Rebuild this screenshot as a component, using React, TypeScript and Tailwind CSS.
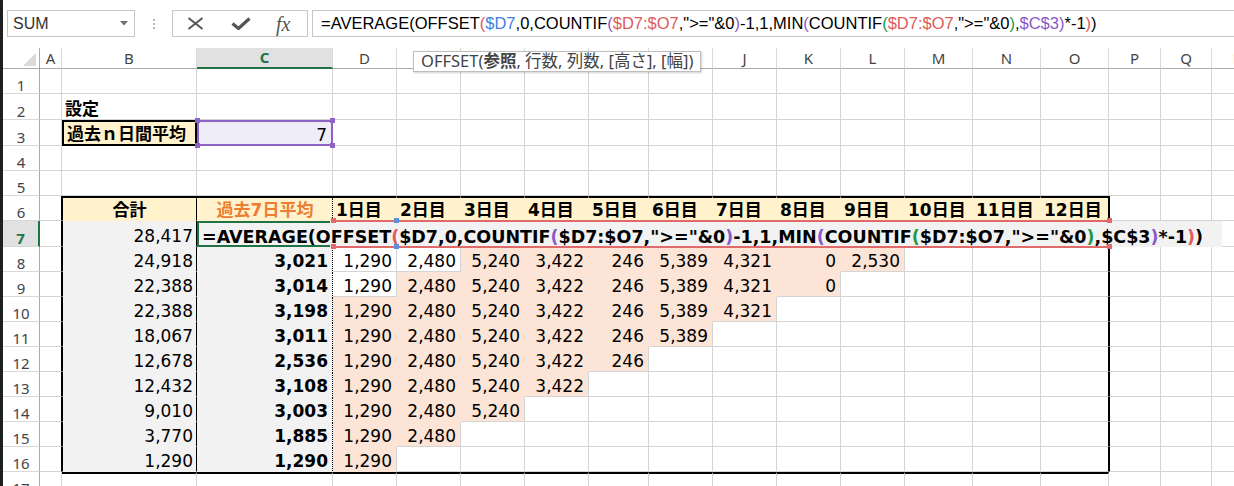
import React from "react";
import clsx from "clsx";

type Fill = "yellow" | "gray" | "salmon" | "lavender";

const COLS = [
  { name: "A", w: "w-[22px]" },
  { name: "B", w: "w-[135px]" },
  { name: "C", w: "w-[136px]" },
  { name: "D", w: "w-[64px]" },
  { name: "E", w: "w-[64px]" },
  { name: "F", w: "w-[64px]" },
  { name: "G", w: "w-[64px]" },
  { name: "H", w: "w-[60px]" },
  { name: "I", w: "w-[64px]" },
  { name: "J", w: "w-[64px]" },
  { name: "K", w: "w-[64px]" },
  { name: "L", w: "w-[64px]" },
  { name: "M", w: "w-[68px]" },
  { name: "N", w: "w-[68px]" },
  { name: "O", w: "w-[68px]" },
  { name: "P", w: "w-[52px]" },
  { name: "Q", w: "w-[51px]" },
  { name: "R", w: "w-[52px]" },
];

// headers hidden behind the function tooltip
const UNDER_TIP = ["E", "F", "G", "H", "I"];

const ROW_H: Record<number, string> = {
  2: "h-[26px]",
  3: "h-[26px]",
  7: "h-[26px]",
};

const DAYS = ["1,290", "2,480", "5,240", "3,422", "246", "5,389", "4,321", "0", "2,530"];

const DATA: Record<number, { total: string; avg?: string; days: string[]; plain: number }> = {
  7: { total: "28,417", days: [], plain: 0 },
  8: { total: "24,918", avg: "3,021", days: DAYS.slice(0, 9), plain: 2 },
  9: { total: "22,388", avg: "3,014", days: DAYS.slice(0, 8), plain: 1 },
  10: { total: "22,388", avg: "3,198", days: DAYS.slice(0, 7), plain: 0 },
  11: { total: "18,067", avg: "3,011", days: DAYS.slice(0, 6), plain: 0 },
  12: { total: "12,678", avg: "2,536", days: DAYS.slice(0, 5), plain: 0 },
  13: { total: "12,432", avg: "3,108", days: DAYS.slice(0, 4), plain: 0 },
  14: { total: "9,010", avg: "3,003", days: DAYS.slice(0, 3), plain: 0 },
  15: { total: "3,770", avg: "1,885", days: DAYS.slice(0, 2), plain: 0 },
  16: { total: "1,290", avg: "1,290", days: DAYS.slice(0, 1), plain: 0 },
};

const BG: Record<Fill, string> = {
  yellow: "bg-[#fff2cc]",
  gray: "bg-[#f2f2f2]",
  salmon: "bg-[#fce4d6]",
  lavender: "bg-[#efedf8]",
};
const BR: Record<Fill, string> = {
  yellow: "border-r-[#fff2cc]",
  gray: "border-r-[#f2f2f2]",
  salmon: "border-r-[#fce4d6]",
  lavender: "border-r-[#efedf8]",
};
const BB: Record<Fill, string> = {
  yellow: "border-b-[#fff2cc]",
  gray: "border-b-[#f2f2f2]",
  salmon: "border-b-[#fce4d6]",
  lavender: "border-b-[#efedf8]",
};

const RED = "text-[#e05a5a]";
const BLUE = "text-[#3f7fe0]";
const PURPLE = "text-[#8b58c9]";
const GREEN = "text-[#22994a]";

const BAR_TOKENS: [string, string][] = [
  ["=AVERAGE(OFFSET", ""],
  ["(", RED],
  ["$D7", BLUE],
  [",0,COUNTIF", ""],
  ["(", PURPLE],
  ["$D7:$O7", RED],
  [',">="&0', ""],
  [")", PURPLE],
  ["-1,1,MIN", ""],
  ["(", PURPLE],
  ["COUNTIF", ""],
  ["(", GREEN],
  ["$D7:$O7", RED],
  [',">="&0', ""],
  [")", GREEN],
  [",", ""],
  ["$C$3", PURPLE],
  [")", PURPLE],
  ["*-1", ""],
  [")", RED],
  [")", ""],
];

const CELL_TOKENS: [string, string][] = [
  ["=AVERAGE(OFFSET", ""],
  ["(", RED],
  ["$D7,0,COUNTIF", ""],
  ["(", PURPLE],
  ['$D7:$O7,">="&0', ""],
  [")", PURPLE],
  ["-1,1,MIN", ""],
  ["(", PURPLE],
  ["COUNTIF", ""],
  ["(", GREEN],
  ['$D7:$O7,">="&0', ""],
  [")", GREEN],
  [",$C$3", ""],
  [")", PURPLE],
  ["*-1", ""],
  [")", RED],
  [")", ""],
];

function fillAt(r: number, c: number): Fill | null {
  if (r === 3 && c === 1) return "yellow";
  if (r === 3 && c === 2) return "lavender";
  if (r === 6 && c >= 1 && c <= 14) return "yellow";
  if (r >= 7 && r <= 16 && (c === 1 || c === 2)) return "gray";
  if (r >= 8 && r <= 16 && c >= 3 && c <= 14) {
    const d = DATA[r];
    const i = c - 3;
    if (i < d.days.length && i >= d.plain) return "salmon";
  }
  return null;
}

type Content = { text: string; align: "l" | "r" | "c"; bold?: boolean; orange?: boolean };

function contentAt(r: number, c: number): Content | null {
  if (r === 2 && c === 1) return { text: "設定", align: "l", bold: true };
  if (r === 3 && c === 1) return { text: "過去ｎ日間平均", align: "l", bold: true };
  if (r === 3 && c === 2) return { text: "7", align: "r" };
  if (r === 6) {
    if (c === 1) return { text: "合計", align: "c", bold: true };
    if (c === 2) return { text: "過去7日平均", align: "c", bold: true, orange: true };
    if (c >= 3 && c <= 14) return { text: `${c - 2}日目`, align: "l", bold: true };
  }
  const d = DATA[r];
  if (d) {
    if (c === 1) return { text: d.total, align: "r" };
    if (c === 2 && d.avg) return { text: d.avg, align: "r", bold: true };
    if (c >= 3 && c - 3 < d.days.length) return { text: d.days[c - 3], align: "r" };
  }
  return null;
}

function Square({ pos, color }: { pos: string; color: string }) {
  return <span className={clsx("absolute z-20 h-[5px] w-[5px]", pos, color)} />;
}

function Cell({ r, c }: { r: number; c: number }) {
  const f = fillAt(r, c);
  const tbl = r >= 6 && r <= 16;
  const content = contentAt(r, c);

  const right =
    c === 2 && tbl
      ? ""
      : tbl && (c === 0 || c === 1 || c === 14)
        ? "border-r border-r-black"
        : f && fillAt(r, c + 1)
          ? clsx("border-r", BR[f])
          : "border-r border-r-[#d4d4d4]";
  const bottom =
    f && (fillAt(r + 1, c) || r === 16) ? clsx("border-b", BB[f]) : "border-b border-b-[#d4d4d4]";
  const top = (r === 6 || r === 17) && c >= 1 && c <= 14 ? "border-t-2 border-t-black" : "";
  const left = tbl && (c === 1 || c === 15) ? "border-l border-l-black" : "";
  const b3 = r === 3 && c === 1;

  return (
    <div
      className={clsx(
        "relative flex h-full shrink-0 items-end whitespace-nowrap text-[17px] leading-[20px]",
        content?.orange ? "text-[#ed7d31]" : "text-black",
        COLS[c].w,
        f && BG[f],
        b3 ? "border-2 border-black" : clsx(right, bottom, top, left),
        content?.align === "l" && "justify-start pl-[3px]",
        content?.align === "c" && "justify-center",
        content?.align === "r" && (c === 1 ? "justify-end pr-[3px]" : c === 2 ? "justify-end pr-[5px]" : "justify-end pr-[4px]"),
        content?.bold && "font-bold",
      )}
    >
      {content?.text}
      {c === 2 && tbl && (
        <span className="absolute bottom-0 right-0 top-0 border-r border-dotted border-r-black" />
      )}
      {r === 3 && c === 2 && (
        <>
          <span className="absolute left-0 top-0 z-10 h-[26px] w-[136px] border-2 border-[#8e63c8]" />
          <Square pos="left-[-2px] top-[-2px]" color="bg-[#8e63c8]" />
          <Square pos="left-[133px] top-[-2px]" color="bg-[#8e63c8]" />
          <Square pos="left-[-2px] top-[23px]" color="bg-[#8e63c8]" />
          <Square pos="left-[133px] top-[23px]" color="bg-[#8e63c8]" />
        </>
      )}
      {r === 7 && c === 2 && <Editor />}
    </div>
  );
}

function Editor() {
  return (
    <>
      <div className="absolute left-0 top-0 z-10 flex h-[26px] w-[1025px] items-end whitespace-nowrap bg-[#f2f2f2] pl-[5px] text-[17.5px] font-bold leading-[20px] text-black">
        {CELL_TOKENS.map(([t, cls], i) => (
          <span key={i} className={cls}>
            {t}
          </span>
        ))}
      </div>
      {/* active cell */}
      <span className="absolute left-0 top-0 z-20 h-[26px] w-[133px] border-2 border-r-0 border-[#217346]" />
      {/* $D7:$O7 range */}
      <span className="absolute left-[136px] top-[-1px] z-20 h-[2px] w-[776px] bg-[#e06a6a]" />
      <span className="absolute left-[136px] top-[25px] z-20 h-[2px] w-[776px] bg-[#e06a6a]" />
      <Square pos="left-[197px] top-[-3px]" color="bg-[#5b8fdc]" />
      <Square pos="left-[197px] top-[23px]" color="bg-[#5b8fdc]" />
      <Square pos="left-[134px] top-[-3px]" color="bg-[#e06a6a]" />
      <Square pos="left-[134px] top-[23px]" color="bg-[#e06a6a]" />
      <Square pos="left-[910px] top-[-3px]" color="bg-[#e06a6a]" />
      <Square pos="left-[910px] top-[23px]" color="bg-[#e06a6a]" />
    </>
  );
}

function SheetRow({ r }: { r: number }) {
  const active = r === 7;
  return (
    <div className={clsx("flex shrink-0", ROW_H[r] ?? "h-[25px]")}>
      <div
        className={clsx(
          "flex w-[37px] shrink-0 items-end justify-center border-b border-b-[#d9d9d9] font-['Noto_Sans',sans-serif] text-[15px] leading-[16px]",
          active
            ? "border-r-2 border-r-[#217346] bg-[#e1e1e1] font-bold text-[#217346]"
            : "border-r border-r-[#ababab] text-[#444]",
        )}
      >
        {r}
      </div>
      {COLS.map((col, c) => (
        <Cell key={col.name} r={r} c={c} />
      ))}
    </div>
  );
}

function ColumnHeaders() {
  return (
    <div className="flex h-[21px] shrink-0 font-['Noto_Sans',sans-serif] text-[15px] text-[#444]">
      <div className="flex w-[37px] shrink-0 items-end justify-end border-b border-r border-b-[#ababab] border-r-[#ababab] pb-[2px] pr-[3px]">
        <svg width="13" height="13" viewBox="0 0 13 13">
          <polygon points="13,0 13,13 0,13" fill="#dadada" />
        </svg>
      </div>
      {COLS.map((col) => (
        <div
          key={col.name}
          className={clsx(
            "flex shrink-0 items-center justify-center border-r border-r-[#d9d9d9]",
            col.w,
            col.name === "C"
              ? "border-b-2 border-b-[#217346] bg-[#e1e1e1] font-bold text-[#217346]"
              : "border-b border-b-[#ababab]",
          )}
        >
          {UNDER_TIP.includes(col.name) ? null : col.name}
        </div>
      ))}
    </div>
  );
}

function FormulaBar() {
  return (
    <div className="flex h-[48px] shrink-0 items-start pt-[10px]">
      <div className="ml-[4px] flex h-[27px] w-[128px] shrink-0 items-center justify-between border border-[#c6c6c6] pl-[5px] pr-[6px] font-['Liberation_Sans',sans-serif] text-[16px] text-[#333]">
        <span>SUM</span>
        <svg width="8" height="5" viewBox="0 0 8 5">
          <path d="M0 0h8L4 4.5z" fill="#707070" />
        </svg>
      </div>
      <div className="flex h-[27px] w-[37px] shrink-0 items-center justify-center">
        <div className="flex flex-col gap-[2px]">
          <span className="h-[2px] w-[2px] bg-[#b8b8b8]" />
          <span className="h-[2px] w-[2px] bg-[#b8b8b8]" />
          <span className="h-[2px] w-[2px] bg-[#b8b8b8]" />
        </div>
      </div>
      <div className="flex h-[27px] w-[136px] shrink-0 items-center border border-[#c6c6c6] pl-[14px]">
        <svg width="17" height="13" viewBox="0 0 17 13">
          <path d="M1.5 1L15.5 12M15.5 1L1.5 12" stroke="#555" strokeWidth="2" fill="none" />
        </svg>
        <svg className="ml-[27px]" width="20" height="13" viewBox="0 0 20 13">
          <path d="M1.5 6.5L7.5 11.5L18.5 1.5" stroke="#555" strokeWidth="3.2" fill="none" />
        </svg>
        <span className="ml-[25px] font-['Liberation_Serif',serif] text-[20px] italic leading-none text-[#555]">
          fx
        </span>
      </div>
      <div className="ml-[4px] flex h-[27px] min-w-0 flex-1 items-center overflow-hidden whitespace-nowrap border border-r-0 border-[#c6c6c6] pl-[8px] font-['Liberation_Sans',sans-serif] text-[16.5px] text-black">
        {BAR_TOKENS.map(([t, cls], i) => (
          <span key={i} className={cls}>
            {t}
          </span>
        ))}
      </div>
    </div>
  );
}

export default function App() {
  const rows = Array.from({ length: 17 }, (_, i) => i + 1);
  return (
    <div className="relative flex h-[486px] w-[1234px] overflow-hidden bg-white font-['DejaVu_Sans','Noto_Sans_CJK_JP',sans-serif]">
      <div className="w-[3px] shrink-0 bg-[#1f1f1f]" />
      <div className="flex min-w-0 flex-1 flex-col">
        <FormulaBar />
        <ColumnHeaders />
        {rows.map((r) => (
          <SheetRow key={r} r={r} />
        ))}
      </div>

      {/* function tooltip */}
      <div className="absolute left-[413px] top-[51px] z-30 flex h-[21px] items-center whitespace-nowrap border border-[#bdbdbd] bg-white px-[7px] font-['Noto_Sans','Noto_Sans_CJK_JP',sans-serif] text-[16.5px] text-[#444] shadow-[1px_1px_2px_rgba(0,0,0,0.18)]">
        OFFSET(<b className="font-bold">参照</b>, 行数, 列数, [高さ], [幅])
      </div>
    </div>
  );
}
